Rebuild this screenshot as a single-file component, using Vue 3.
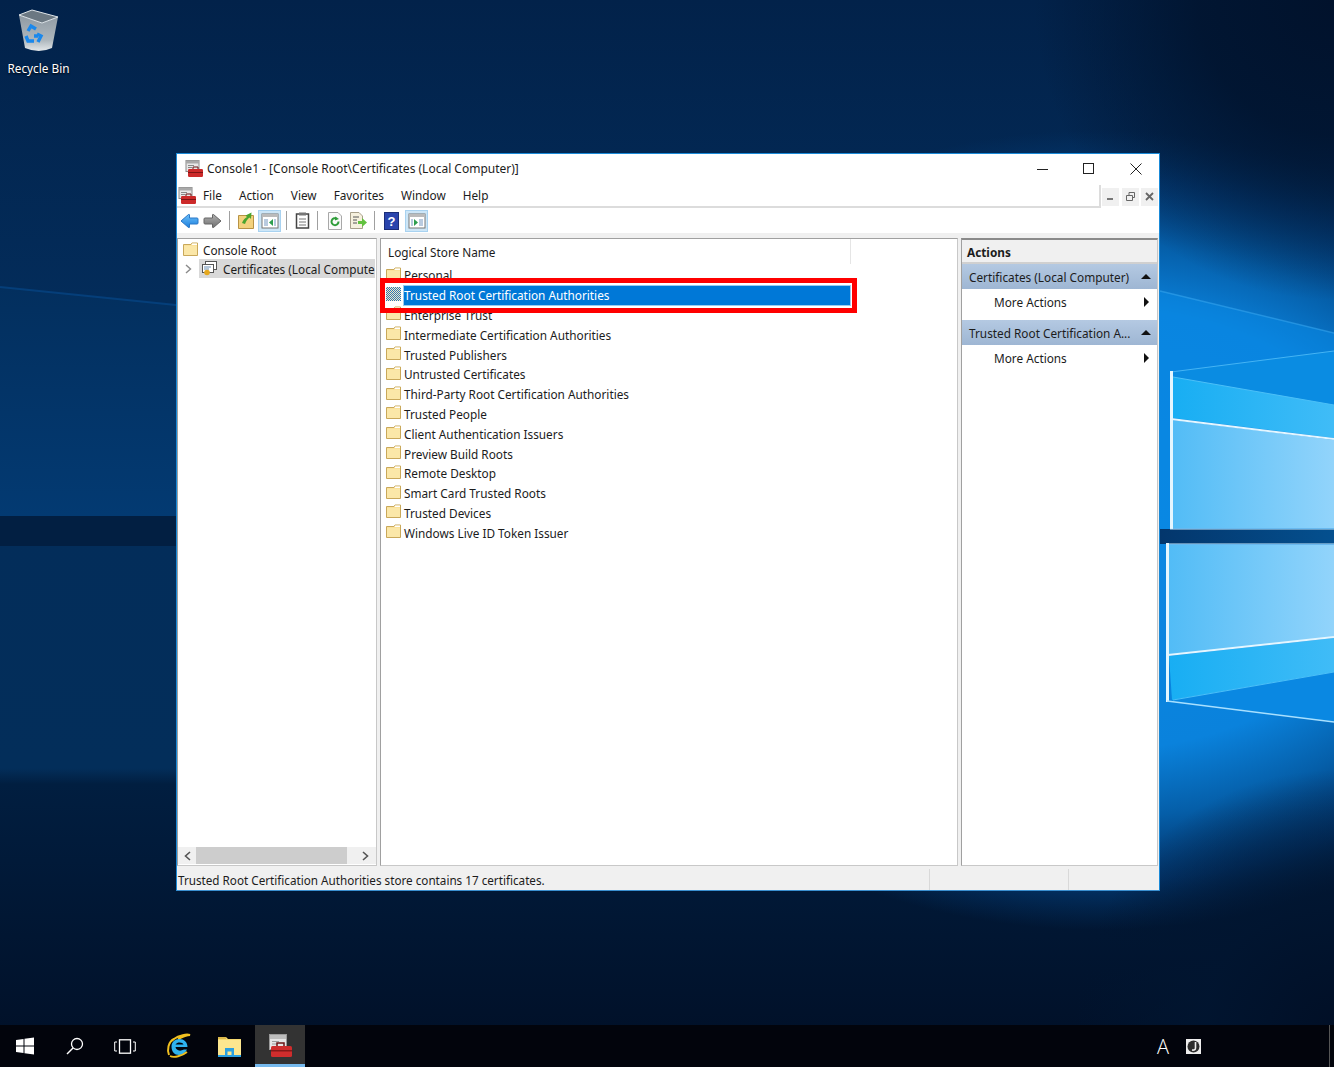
<template>
  <div class="desktop">
    <svg class="wallpaper" viewBox="0 0 1334 1067" preserveAspectRatio="none">
      <defs>
        <linearGradient id="base" x1="0" y1="0" x2="0" y2="1">
          <stop offset="0" stop-color="#02224a" />
          <stop offset=".28" stop-color="#032c5a" />
          <stop offset=".72" stop-color="#032e5a" />
          <stop offset=".735" stop-color="#011e40" />
          <stop offset="1" stop-color="#010f26" />
        </linearGradient>
        <linearGradient id="leftLit" x1="0" y1="0" x2="0" y2="1">
          <stop offset="0" stop-color="#032f5e" />
          <stop offset="1" stop-color="#033a72" />
        </linearGradient>
        <radialGradient id="glow" gradientUnits="userSpaceOnUse" cx="0" cy="0" r="1" gradientTransform="translate(1100 530) scale(540 400)">
          <stop offset="0" stop-color="#0a88e4" />
          <stop offset=".55" stop-color="#0a82dc" />
          <stop offset=".72" stop-color="#055ea8" />
          <stop offset=".88" stop-color="#034080" stop-opacity=".7" />
          <stop offset="1" stop-color="#033a72" stop-opacity="0" />
        </radialGradient>
        <radialGradient id="cornerTop" gradientUnits="userSpaceOnUse" cx="1334" cy="0" r="300">
          <stop offset="0" stop-color="#01122c" />
          <stop offset=".45" stop-color="#01142f" stop-opacity=".9" />
          <stop offset="1" stop-color="#01142f" stop-opacity="0" />
        </radialGradient>
        <radialGradient id="cornerBottom" gradientUnits="userSpaceOnUse" cx="1334" cy="1030" r="260">
          <stop offset="0" stop-color="#010f26" />
          <stop offset=".5" stop-color="#011530" stop-opacity=".85" />
          <stop offset="1" stop-color="#011530" stop-opacity="0" />
        </radialGradient>
        <linearGradient id="paneUp" x1="0" y1="0" x2="1" y2="0">
          <stop offset="0" stop-color="#52bcf6" />
          <stop offset="1" stop-color="#92d4fb" />
        </linearGradient>
        <linearGradient id="paneBand" x1="0" y1="0" x2="1" y2="0">
          <stop offset="0" stop-color="#18aef3" />
          <stop offset="1" stop-color="#40bcf7" />
        </linearGradient>
        <linearGradient id="bandDark" x1="0" y1="0" x2="1" y2="0">
          <stop offset="0" stop-color="#03366c" />
          <stop offset="1" stop-color="#04508f" />
        </linearGradient>
        <linearGradient id="binBody" x1="0" y1="0" x2="0" y2="1">
          <stop offset="0" stop-color="#8f9aa3" />
          <stop offset=".7" stop-color="#aeb7bd" />
          <stop offset="1" stop-color="#e4e8ea" />
        </linearGradient>
        <linearGradient id="backArrow" x1="0" y1="0" x2="0" y2="1">
          <stop offset="0" stop-color="#6cc0fa" />
          <stop offset="1" stop-color="#1c7edc" />
        </linearGradient>
        <linearGradient id="fwdArrow" x1="0" y1="0" x2="0" y2="1">
          <stop offset="0" stop-color="#b0b0b0" />
          <stop offset="1" stop-color="#707070" />
        </linearGradient>
      </defs>

      <rect width="1334" height="1067" fill="url(#base)" />
      <polygon points="0,287 176,305 700,360 700,516 0,516" fill="url(#leftLit)" />
      <rect width="1334" height="1067" fill="url(#glow)" />
      <polygon points="1160,291 1334,333 1334,530 1160,530" fill="#0a88e4" opacity=".55" />
      <rect width="1334" height="1067" fill="url(#cornerTop)" />
      <rect width="1334" height="1067" fill="url(#cornerBottom)" />
      <path d="M1160 291L1334 333" stroke="#3aa8f0" stroke-width="1.500" opacity=".55" />
      <path d="M0 287L176 305" stroke="#075098" stroke-width="2" opacity=".5" />

      <rect x="0" y="516" width="176" height="30" fill="#021f42" />
      <rect x="1160" y="529" width="174" height="15" fill="url(#bandDark)" />

      <polygon points="1172,372 1334,351 1334,405 1173,377" fill="#0a8ce2" />
      <polygon points="1173,377 1334,405 1334,438 1173,418" fill="url(#paneBand)" />
      <polygon points="1172,420 1334,440 1334,528 1172,528" fill="url(#paneUp)" />
      <polygon points="1169,545 1334,545 1334,637 1169,655" fill="url(#paneUp)" />
      <polygon points="1169,656 1334,638 1334,672 1172,700" fill="url(#paneBand)" />
      <polygon points="1172,700 1334,672 1334,722 1167,701" fill="#0a88e2" />

      <path d="M1171 372L1334 351" stroke="#45b4f4" />
      <path d="M1173 377L1334 405" stroke="#4cc0f8" />
      <path d="M1171.500 371V529" stroke="#e4f6ff" stroke-width="3" />
      <path d="M1170 529H1334" stroke="#c8ecff" />
      <path d="M1171 419L1334 439" stroke="#e4f6ff" stroke-width="2" />
      <path d="M1167 544H1334" stroke="#c8ecff" />
      <path d="M1167.500 543V702" stroke="#e4f6ff" stroke-width="3" />
      <path d="M1168 655L1334 637" stroke="#e4f6ff" stroke-width="2" />
      <path d="M1167 701L1334 722" stroke="#a8e0ff" stroke-width="1.500" />
      <path d="M1173 700L1334 672" stroke="#4cc0f8" />

      <symbol id="folder" viewBox="0 0 15 14">
        <path d="M.5 2.5V13.5H14.5V1H9L8 2.5Z" fill="#f9dc8c" stroke="#c9a85a" />
        <path d="M1 3.5H14V13H1Z" fill="#fbe7a8" />
        <path d="M9 1.4H14V3H8.6Z" fill="#fff" />
      </symbol>
      <symbol id="toolbox" viewBox="0 0 18 17">
        <rect x="1" y=".5" width="13" height="11" fill="#e8e8e8" stroke="#8a8a8a" />
        <rect x="1" y=".5" width="13" height="3" fill="#a9a9a9" />
        <path d="M3 5.500H9M3 7.500H7" stroke="#888" />
        <path d="M8 9V7H13V9" fill="none" stroke="#6b1414" />
        <rect x="3" y="9" width="15" height="8" rx="1.200" fill="#cc2a2a" />
        <rect x="3" y="12" width="15" height="1" fill="#7d1414" />
      </symbol>
    </svg>

    <div class="recycle">
      <svg width="44" height="44" viewBox="0 0 44 44">
        <path d="M2 6L8 39Q22 45 35 39L41 8L25 14Z" fill="url(#binBody)" />
        <path d="M2 6L15 1L41 8L25 14Z" fill="#6b7882" stroke="#dfe5e9" />
        <path d="M11 22L14 17L19 20M21 27H17M9 27L11 32H17M21 33L24 27L20 25" fill="none" stroke="#1a88ec" stroke-width="3.400" />
      </svg>
      <span>Recycle Bin</span>
    </div>

    <div class="window">
      <div class="titlebar">
        <svg class="app-icon" width="18" height="17" viewBox="0 0 18 17"><use href="#toolbox" /></svg>
        <span class="title-text">Console1 - [Console Root\Certificates (Local Computer)]</span>
        <div class="caption">
          <svg width="12" height="12" viewBox="0 0 12 12"><path d="M1 6.5H12" stroke="#222" /></svg>
          <svg width="12" height="12" viewBox="0 0 12 12"><rect x=".5" y=".5" width="10" height="10" fill="none" stroke="#222" /></svg>
          <svg width="12" height="12" viewBox="0 0 12 12"><path d="M.5 .5L11.5 11.5M11.5 .5L.5 11.5" stroke="#222" /></svg>
        </div>
      </div>

      <div class="menubar">
        <svg class="menu-icon" width="18" height="17" viewBox="0 0 18 17"><use href="#toolbox" /></svg>
        <span v-for="m in menus" :key="m" class="menu-item">{{ m }}</span>
        <div class="mdi-buttons">
          <span class="mdi-btn"><svg width="9" height="9" viewBox="0 0 9 9"><rect x="1" y="6" width="6" height="2" fill="#777" /></svg></span>
          <span class="mdi-btn"><svg width="9" height="9" viewBox="0 0 9 9"><path d="M.5 3.5H6.5V8.5H.5ZM3 3V.5H8.5V5.5H7" fill="none" stroke="#666" /></svg></span>
          <span class="mdi-btn"><svg width="9" height="9" viewBox="0 0 9 9"><path d="M1 1L8 8M8 1L1 8" stroke="#666" stroke-width="1.8" /></svg></span>
        </div>
      </div>

      <div class="toolbar">
        <span class="tool">
          <svg width="19" height="16" viewBox="0 0 19 16"><path d="M1 8L8.500 1.500Q9.500 1 9.500 2V5H17Q18 5 18 6V10Q18 11 17 11H9.500V14Q9.500 15 8.500 14.500Z" fill="url(#backArrow)" stroke="#2a78c8" /></svg>
        </span>
        <span class="tool">
          <svg width="19" height="16" viewBox="0 0 19 16"><path d="M18 8L10.500 1.500Q9.500 1 9.500 2V5H2Q1 5 1 6V10Q1 11 2 11H9.500V14Q9.500 15 10.500 14.500Z" fill="url(#fwdArrow)" stroke="#666" /></svg>
        </span>
        <i class="sep"></i>
        <span class="tool">
          <svg width="17" height="17" viewBox="0 0 17 17">
            <path d="M.5 3.500H15.500V16.500H.5Z" fill="#f3d27e" stroke="#b89345" />
            <path d="M4 11C5 8 7 6 9 5L7.500 3.500L13.500 .5L13 7L11.500 5.500C9.500 7 8 9 7 12Z" fill="#4aa52e" />
          </svg>
        </span>
        <span class="tool on">
          <svg width="18" height="16" viewBox="0 0 18 16">
            <rect x="1" y="1" width="16" height="14" fill="#fff" stroke="#777" />
            <rect x="1" y="1" width="16" height="3" fill="#bbb" />
            <path d="M3 6H7V13H3ZM13 6H15V13H13Z" fill="#b9cbe0" />
            <path d="M12 6V13L8 9.500Z" fill="#2e9e4f" />
          </svg>
        </span>
        <i class="sep"></i>
        <span class="tool narrow">
          <svg width="15" height="17" viewBox="0 0 15 17">
            <rect x="1.500" y="2" width="12" height="14" fill="#fff" stroke="#444" stroke-width="1.500" />
            <rect x="4" y="0.500" width="7" height="3" fill="#777" />
            <path d="M4 7H11M4 10H11M4 13H11" stroke="#777" />
          </svg>
        </span>
        <i class="sep"></i>
        <span class="tool">
          <svg width="16" height="18" viewBox="0 0 16 18">
            <path d="M1.500 .500H11L14.500 4V17.500H1.500Z" fill="#fafafa" stroke="#a8a8a8" />
            <path d="M11.500 9.500A3.500 3.500 0 1 1 10 6.800" fill="none" stroke="#2f9d3a" stroke-width="2" />
            <path d="M8 4.500L12 7L8 8.500Z" fill="#2f9d3a" />
          </svg>
        </span>
        <span class="tool">
          <svg width="18" height="17" viewBox="0 0 18 17">
            <path d="M1.500 .500H10L13.500 4V16.500H1.500Z" fill="#f6f1de" stroke="#a8a08a" />
            <path d="M4 5H10M4 8H8M4 11H8" stroke="#555" />
            <path d="M9 9H13V6L18 10.500L13 15V12H9Z" fill="#63c23f" />
          </svg>
        </span>
        <i class="sep"></i>
        <span class="tool">
          <svg width="15" height="18" viewBox="0 0 15 18">
            <rect x=".500" y=".500" width="14" height="17" fill="#2a45ad" stroke="#1b2d78" />
            <text x="7.500" y="14" text-anchor="middle" font-size="13" font-weight="700" fill="#fff" font-family="Liberation Sans, sans-serif">?</text>
          </svg>
        </span>
        <span class="tool on last">
          <svg width="18" height="16" viewBox="0 0 18 16">
            <rect x="1" y="1" width="16" height="14" fill="#fff" stroke="#777" />
            <rect x="1" y="1" width="16" height="3" fill="#bbb" />
            <path d="M11 6H15V13H11ZM3 6H5V13H3Z" fill="#b9cbe0" />
            <path d="M6 6V13L10 9.500Z" fill="#2e9e4f" />
          </svg>
        </span>
      </div>

      <div class="panes">
        <div class="pane tree">
          <div class="tree-body">
            <div class="tree-row">
              <svg class="folder-icon" viewBox="0 0 15 14"><use href="#folder" /></svg>
              <span>Console Root</span>
            </div>
            <div class="tree-row second">
              <svg class="chev" width="7" height="10" viewBox="0 0 7 10"><path d="M1 1L5.500 5L1 9" fill="none" stroke="#8a8a8a" stroke-width="1.400" /></svg>
              <div class="tree-selected">
                <svg class="cert-icon" width="16" height="15" viewBox="0 0 16 15">
                  <rect x="4.500" y=".5" width="11" height="8" fill="#fff" stroke="#555" />
                  <rect x="1.500" y="3.500" width="11" height="8" fill="#fff" stroke="#555" />
                  <path d="M3 6H10M3 8H8" stroke="#6b8fb5" />
                  <circle cx="6" cy="11.500" r="2.800" fill="#e5a81e" />
                </svg>
                <span>Certificates (Local Computer)</span>
              </div>
            </div>
          </div>
          <div class="hscroll">
            <span class="arrow">
              <svg width="7" height="10" viewBox="0 0 7 10"><path d="M6 1L1.500 5L6 9" fill="none" stroke="#555" stroke-width="1.600" /></svg>
            </span>
            <div class="thumb"></div>
            <span class="arrow end">
              <svg width="7" height="10" viewBox="0 0 7 10"><path d="M1 1L5.500 5L1 9" fill="none" stroke="#555" stroke-width="1.600" /></svg>
            </span>
          </div>
        </div>

        <div class="pane list">
          <div class="list-head"><span>Logical Store Name</span></div>
          <div class="list-body">
            <div v-for="(s, i) in stores" :key="s" class="list-row" :class="{ selected: i === 1 }">
              <svg v-if="i !== 1" class="folder-icon" viewBox="0 0 15 14"><use href="#folder" /></svg>
              <span v-else class="folder-dither"></span>
              <span class="row-text">{{ s }}</span>
            </div>
          </div>
          <div class="red-box"></div>
        </div>

        <div class="pane actions">
          <div class="actions-head">Actions</div>
          <template v-for="g in actionGroups" :key="g">
            <div class="group-head">
              <span>{{ g }}</span>
              <i class="tri-up"></i>
            </div>
            <div class="action-item">
              <span>More Actions</span>
              <i class="tri-right"></i>
            </div>
          </template>
        </div>
      </div>

      <div class="statusbar">
        <div class="status-main">Trusted Root Certification Authorities store contains 17 certificates.</div>
        <div class="status-cell"></div>
        <div class="status-cell end"></div>
      </div>
    </div>

    <div class="taskbar">
      <span class="task">
        <svg width="18" height="18" viewBox="0 0 18 18"><path d="M0 3L7.500 2V8.500H0ZM8.500 1.800L18 .500V8.500H8.500ZM0 9.500H7.500V16L0 15ZM8.500 9.500H18V17.500L8.500 16.200Z" fill="#fff" /></svg>
      </span>
      <span class="task">
        <svg width="18" height="18" viewBox="0 0 18 18"><circle cx="11" cy="7" r="5.500" fill="none" stroke="#fff" stroke-width="1.300" /><path d="M7 11L1 17" stroke="#fff" stroke-width="1.500" /></svg>
      </span>
      <span class="task">
        <svg width="22" height="15" viewBox="0 0 22 15"><rect x="5.500" y=".800" width="11" height="13.400" fill="none" stroke="#fff" stroke-width="1.300" /><path d="M3 3H.700V12H3M19 3H21.300V12H19" fill="none" stroke="#fff" /></svg>
      </span>
      <span class="task ie">
        <svg width="26" height="26" viewBox="0 0 26 26">
          <path d="M3 22C1 17 2 9 8 6C13 2 21 1 24 2C21 2 16 4 12 6" fill="none" stroke="#f0c020" stroke-width="2" />
          <path d="M5.500 13.500C5.500 9 9 6 13.500 6S21.500 9 21.500 14H9.500C10 17 13.500 19 18 16.500H21C19.500 20 16.500 22 13 22C8.500 22 5.500 18.500 5.500 13.500ZM9.500 11.500H17.500C17 9 11 8.500 9.500 11.500Z" fill="#2eb2ee" fill-rule="evenodd" />
          <path d="M4 23C8 25 16 23 21 19" fill="none" stroke="#f0c020" stroke-width="1.800" />
        </svg>
      </span>
      <span class="task wide">
        <svg width="23" height="21" viewBox="0 0 23 21">
          <path d="M0 1H8L10 3H23V21H0Z" fill="#f6d96f" />
          <path d="M0 4H23V21H0Z" fill="#fce68f" />
          <path d="M0 1H8V3H0Z" fill="#dcb84a" />
          <path d="M7 12H16V19H13.500V15.500H9.500V19H7Z" fill="#2a9fe0" />
          <path d="M0 19H23V21H0Z" fill="#2a9fe0" />
        </svg>
      </span>
      <span class="task active">
        <svg width="24" height="24" viewBox="0 0 24 24">
          <rect x="1.500" y=".5" width="17" height="15" fill="#e6e6e6" stroke="#9a9a9a" />
          <rect x="2" y="1" width="16" height="4" fill="#bdbdbd" />
          <path d="M4 7.500H11M4 10H9" stroke="#9c9c9c" />
          <path d="M9 12V9H16V12" fill="none" stroke="#6b1414" stroke-width="1.500" />
          <rect x="3" y="12" width="21" height="11" rx="1.500" fill="#cf2d2d" />
          <rect x="3" y="16" width="21" height="1.500" fill="#851818" />
        </svg>
      </span>
      <div class="tray">
        <span class="ime-a">A</span>
        <span class="ime-j">
          <svg width="15" height="15" viewBox="0 0 15 15"><rect width="15" height="15" fill="#eee" /><circle cx="7.500" cy="7.500" r="6" fill="#2d2d2d" /><path d="M9.500 3V9Q9.500 11.500 6 11" fill="none" stroke="#eee" stroke-width="1.600" /></svg>
        </span>
      </div>
      <i class="show-desktop"></i>
    </div>
  </div>
</template>

<script setup>
const menus = ['File', 'Action', 'View', 'Favorites', 'Window', 'Help']

const stores = [
  'Personal',
  'Trusted Root Certification Authorities',
  'Enterprise Trust',
  'Intermediate Certification Authorities',
  'Trusted Publishers',
  'Untrusted Certificates',
  'Third-Party Root Certification Authorities',
  'Trusted People',
  'Client Authentication Issuers',
  'Preview Build Roots',
  'Remote Desktop',
  'Smart Card Trusted Roots',
  'Trusted Devices',
  'Windows Live ID Token Issuer'
]

const actionGroups = ['Certificates (Local Computer)', 'Trusted Root Certification A...']
</script>

<style>
html,
body {
  margin: 0;
  background: #02162f;
}
</style>

<style scoped>
.desktop {
  position: relative;
  width: 1334px;
  height: 1067px;
  overflow: hidden;
  font-family: "Noto Sans", "Open Sans", sans-serif;
  font-size: 11.8px;
  color: #1c1c1c;
}

.wallpaper {
  position: absolute;
  inset: 0;
  width: 1334px;
  height: 1067px;
}

.recycle {
  position: absolute;
  left: 0;
  top: 9px;
  width: 77px;
  display: flex;
  flex-direction: column;
  align-items: center;
  gap: 7px;
  color: #fff;
  text-shadow: 0 1px 2px #000;
}

.window {
  position: absolute;
  left: 176px;
  top: 153px;
  width: 984px;
  height: 738px;
  box-sizing: border-box;
  border: 1px solid #1a8ad8;
  border-bottom-color: #3a8fd0;
  background: #f0f0f0;
  display: flex;
  flex-direction: column;
}

.titlebar {
  height: 31px;
  flex: none;
  background: #fff;
  display: flex;
  align-items: center;
  padding-left: 8px;
  padding-bottom: 2px;
  box-sizing: border-box;
}

.title-text {
  margin-left: 4px;
  font-size: 12px;
}

.caption {
  margin-left: auto;
  display: flex;
  gap: 35px;
  padding-right: 17px;
}

.menubar {
  height: 23px;
  flex: none;
  background: #fff;
  display: flex;
  align-items: center;
  padding-left: 1px;
  box-sizing: border-box;
  border-bottom: 2px solid #dcdcdc;
}

.menu-icon {
  margin-right: 7px;
}

.menu-item {
  padding-right: 17px;
  padding-bottom: 2px;
}

.mdi-buttons {
  margin-left: auto;
  align-self: stretch;
  width: 60px;
  box-sizing: border-box;
  border-left: 2px solid #dcdcdc;
  margin-bottom: -2px;
  background: #fff;
  display: flex;
  align-items: center;
  justify-content: space-between;
  padding: 0 1px;
}

.mdi-btn {
  width: 17px;
  height: 18px;
  background: #f0f0f0;
  display: flex;
  align-items: center;
  justify-content: center;
}

.toolbar {
  height: 25px;
  flex: none;
  background: #fff;
  display: flex;
  align-items: center;
  padding-left: 1px;
}

.tool {
  width: 23px;
  height: 22px;
  box-sizing: border-box;
  display: flex;
  align-items: center;
  justify-content: center;
}

.tool.narrow {
  width: 20px;
}

.tool.last {
  margin-left: 2px;
}

.tool.on {
  background: #cde6f7;
  border: 1px solid #a8d2f0;
}

.sep {
  width: 1px;
  height: 19px;
  background: #a0a0a0;
  margin: 0 5px;
}

.panes {
  flex: 1;
  min-height: 0;
  display: flex;
  gap: 3px;
  padding: 5px 1px 3px 0;
}

.pane {
  background: #fff;
  box-sizing: border-box;
  border: 1px solid #a0a0a0;
  border-right-color: #c8c8c8;
  border-bottom-color: #c8c8c8;
}

.tree {
  width: 200px;
  flex: none;
  display: flex;
  flex-direction: column;
}

.tree-body {
  flex: 1;
  min-height: 0;
  overflow: hidden;
  padding-top: 2px;
}

.tree-row {
  height: 18px;
  display: flex;
  align-items: center;
  white-space: nowrap;
  padding-left: 5px;
  gap: 5px;
}

.tree-row.second {
  height: 19px;
  padding-left: 7px;
  padding-right: 1px;
  gap: 7px;
}

.tree-selected {
  flex: 1;
  min-width: 0;
  height: 19px;
  overflow: hidden;
  background: #d9d9d9;
  display: flex;
  align-items: center;
  gap: 6px;
  padding-left: 2px;
}

.cert-icon {
  flex: none;
}

.hscroll {
  height: 17px;
  flex: none;
  margin-bottom: 1px;
  background: #f0f0f0;
  display: flex;
  align-items: center;
}

.arrow {
  width: 18px;
  flex: none;
  display: flex;
  justify-content: center;
}

.arrow.end {
  margin-left: auto;
  margin-right: 2px;
}

.thumb {
  width: 151px;
  height: 100%;
  background: #cdcdcd;
}

.list {
  position: relative;
  width: 578px;
  flex: none;
}

.list-head {
  height: 26.5px;
  display: flex;
  align-items: flex-start;
  padding-left: 7px;
}

.list-head span {
  width: 462px;
  height: 25px;
  line-height: 27px;
  border-right: 1px solid #e5e5e5;
}

.list-body {
  padding: 0 5px;
}

.list-row {
  height: 19.8px;
  display: flex;
  align-items: center;
  gap: 2px;
  white-space: nowrap;
}

.folder-icon {
  width: 15px;
  height: 14px;
  flex: none;
  margin-top: -3px;
}

.folder-dither {
  width: 15px;
  height: 14px;
  flex: none;
  margin-top: -2px;
  background: repeating-conic-gradient(#2f74bb 0 25%, #f4ecc0 0 50%) 0 0 / 2px 2px;
}

.list-row.selected .row-text {
  flex: none;
  width: 448px;
  box-sizing: border-box;
  height: 21px;
  line-height: 20px;
  background: #0078d7;
  color: #fff;
  outline: 1px solid #9ccbef;
  outline-offset: -1px;
}

.row-text {
  padding-left: 1px;
}

.red-box {
  position: absolute;
  left: -1px;
  top: 39px;
  width: 477px;
  height: 35px;
  box-sizing: border-box;
  border: 5px solid #ff0000;
}

.actions {
  flex: 1;
  min-width: 0;
  border-top: 2px solid #8a8a8a;
}

.actions-head {
  height: 22px;
  line-height: 24px;
  background: #f0f0f0;
  border-bottom: 2px solid #d0d0d0;
  padding-left: 5px;
  font-weight: 700;
}

.group-head {
  height: 25px;
  background: linear-gradient(#b4c9e2, #9eb6d3);
  display: flex;
  align-items: center;
  justify-content: space-between;
  padding: 0 6px 0 7px;
}

.tri-up {
  width: 0;
  height: 0;
  border-left: 5px solid transparent;
  border-right: 5px solid transparent;
  border-bottom: 5px solid #111;
}

.action-item {
  height: 31px;
  box-sizing: border-box;
  padding: 0 8px 5px 32px;
  display: flex;
  align-items: center;
  justify-content: space-between;
}

.tri-right {
  width: 0;
  height: 0;
  border-top: 5px solid transparent;
  border-bottom: 5px solid transparent;
  border-left: 5px solid #111;
}

.statusbar {
  height: 21px;
  flex: none;
  display: flex;
  align-items: center;
  background: #f0f0f0;
}

.status-main {
  width: 753px;
  box-sizing: border-box;
  padding-left: 1px;
  height: 100%;
  line-height: 23px;
  font-size: 11.7px;
  border-right: 1px solid #d9d9d9;
}

.status-cell {
  width: 138px;
  height: 100%;
  border-right: 1px solid #d9d9d9;
}

.status-cell.end {
  border-right: none;
  flex: 1;
}

.taskbar {
  position: absolute;
  left: 0;
  right: 0;
  bottom: 0;
  height: 42px;
  background: #02040c;
  display: flex;
  align-items: center;
}

.task {
  width: 50px;
  height: 100%;
  display: flex;
  align-items: center;
  justify-content: center;
  box-sizing: border-box;
}

.task.ie {
  width: 51px;
  margin-left: 3px;
}

.task.wide {
  width: 51px;
}

.task.active {
  background: #333;
  border-bottom: 3px solid #76b9ed;
  padding-top: 2px;
}

.tray {
  margin-left: auto;
  display: flex;
  align-items: center;
  gap: 17px;
  padding-right: 133px;
  color: #fff;
}

.ime-a {
  font-size: 20px;
  font-family: "Open Sans", sans-serif;
  font-weight: 300;
}

.ime-j {
  display: flex;
}

.show-desktop {
  position: absolute;
  right: 4px;
  top: 0;
  bottom: 0;
  width: 1px;
  background: #555;
}
</style>
